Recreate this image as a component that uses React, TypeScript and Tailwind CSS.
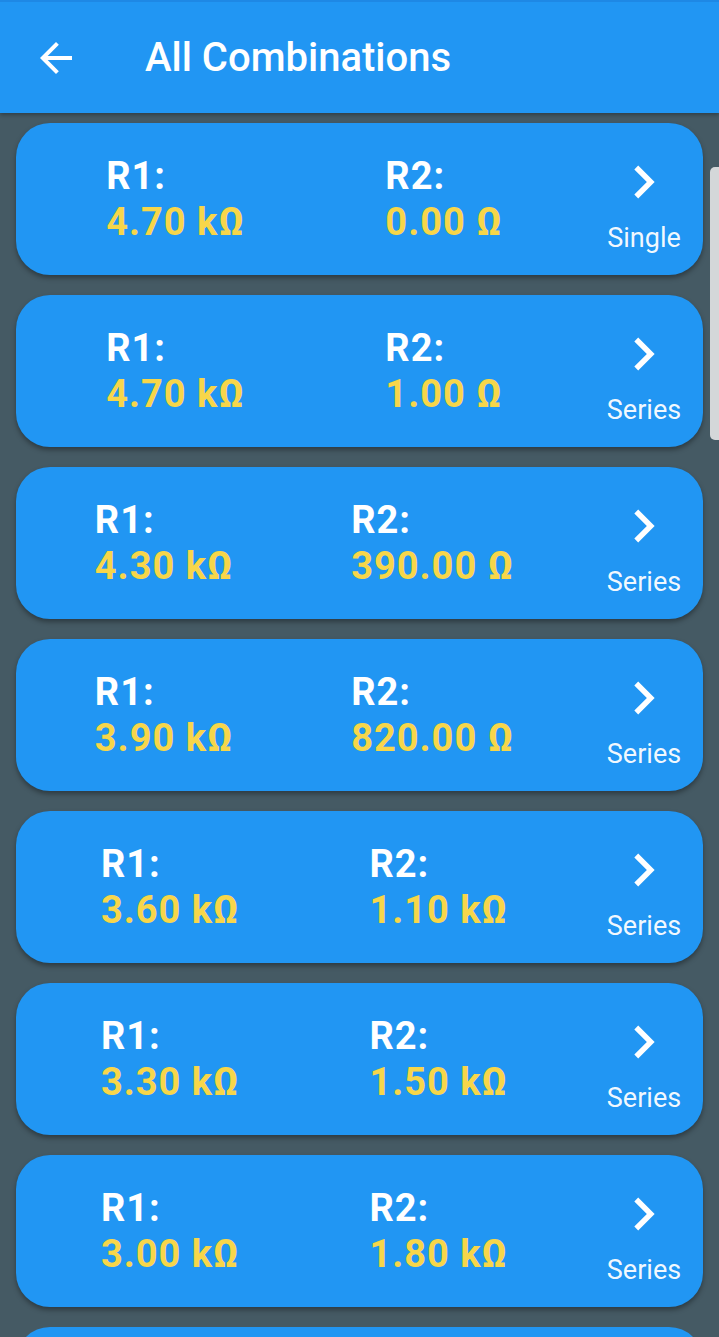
const combos = [
  { r1: "4.70 kΩ", r2: "0.00 Ω", kind: "Single" },
  { r1: "4.70 kΩ", r2: "1.00 Ω", kind: "Series" },
  { r1: "4.30 kΩ", r2: "390.00 Ω", kind: "Series" },
  { r1: "3.90 kΩ", r2: "820.00 Ω", kind: "Series" },
  { r1: "3.60 kΩ", r2: "1.10 kΩ", kind: "Series" },
  { r1: "3.30 kΩ", r2: "1.50 kΩ", kind: "Series" },
  { r1: "3.00 kΩ", r2: "1.80 kΩ", kind: "Series" },
];

const Chevron = () => (
  <svg viewBox="8.2 5.8 8.2 12.4" className="w-[23px] h-[34px]" fill="#ffffff">
    <path d="M10 6L8.59 7.41 13.17 12l-4.58 4.59L10 18l6-6z" />
  </svg>
);

const ValueCol = ({ label, value }: { label: string; value: string }) => (
  <div className="flex flex-col text-[38px] leading-[46px] font-bold tracking-[1px]">
    <span className="text-white">{label}</span>
    <span className="text-[#f7d64a]">{value}</span>
  </div>
);

const ComboCard = ({ r1, r2, kind }: { r1: string; r2: string; kind: string }) => (
  <div className="shrink-0 h-[152px] mx-4 rounded-[34px] bg-[#2196f3] shadow-[0_3px_5px_rgba(0,0,0,0.35)] flex pl-5 pr-5">
    <div className="flex-1 flex items-center justify-around">
      <ValueCol label="R1:" value={r1} />
      <ValueCol label="R2:" value={r2} />
    </div>
    <div className="w-[78px] ml-8 pt-[42px] flex flex-col items-center">
      <Chevron />
      <span className="mt-[23px] text-[27px] leading-[32px] text-white/95">{kind}</span>
    </div>
  </div>
);

export default function App() {
  return (
    <div
      className="relative w-[719px] h-[1337px] overflow-hidden bg-[#455a64]"
      style={{ fontFamily: "Roboto, 'Noto Sans', sans-serif" }}
    >
      {/* App bar */}
      <header className="relative z-10 h-[113px] bg-[#2196f3] border-t-2 border-[#1e88e5] shadow-[0_2px_4px_rgba(0,0,0,0.3)] flex items-center">
        <button className="ml-8 w-12 h-12 flex items-center justify-center">
          <svg viewBox="0 0 24 24" className="w-12 h-12" fill="#ffffff">
            <path d="M20 11H7.83l5.59-5.59L12 4l-8 8 8 8 1.41-1.41L7.83 13H20v-2z" />
          </svg>
        </button>
        <h1 className="ml-[65px] text-[40px] font-medium text-white">All Combinations</h1>
      </header>

      {/* List */}
      <div className="flex flex-col gap-5 pt-[10px]">
        {combos.map((c, i) => (
          <ComboCard key={i} {...c} />
        ))}
        {/* next card, only its top edge is on screen */}
        <div className="shrink-0 h-[152px] mx-4 rounded-[34px] bg-[#2196f3]" />
      </div>

      {/* Scrollbar */}
      <div className="absolute right-0 top-[167px] w-[9px] h-[273px] rounded-l-[5px] bg-[#d4d7d9]" />
    </div>
  );
}
